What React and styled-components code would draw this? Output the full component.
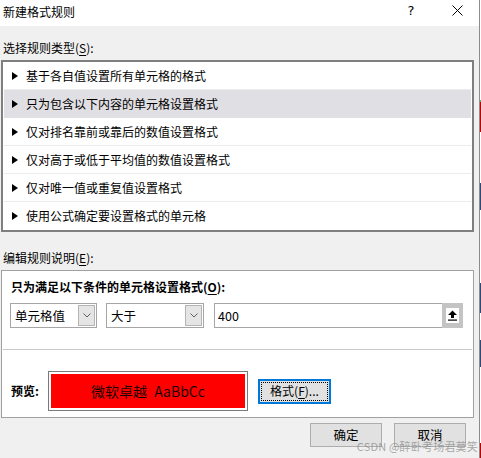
import styled, { createGlobalStyle } from 'styled-components'

const GlobalStyle = createGlobalStyle`
  html, body {
    margin: 0;
    padding: 0;
    background: #f0f0f0;
  }
  body {
    font-family: "Noto Sans CJK SC", "Noto Sans", sans-serif;
    font-size: 12px;
    color: #000;
  }
`

const Page = styled.div`
  position: relative;
  display: flex;
  width: 481px;
  height: 458px;
  overflow: hidden;
`

const Dialog = styled.div`
  width: 479px;
  display: flex;
  flex-direction: column;
  background: #f0f0f0;
  border-right: 1px solid #8c8c8c;
`

const EdgeStrip = styled.div`
  width: 1px;
  display: flex;
  flex-direction: column;
  background: #fff;
`

const Segment = styled.div`
  height: ${(p) => p.$h}px;
  background: ${(p) => p.$c};
  flex-shrink: 0;
`

const TitleBar = styled.div`
  height: 26px;
  display: flex;
  align-items: center;
  justify-content: space-between;
  background: #fff;
`

const Title = styled.span`
  padding-left: 3px;
  font-size: 12px;
  line-height: 16px;
  margin-top: -3px;
`

const TitleButtons = styled.div`
  display: flex;
  align-self: stretch;
  margin-right: -1px;
`

const TitleButton = styled.div`
  width: 46px;
  display: flex;
  align-items: center;
  justify-content: center;
  font-family: "DejaVu Sans", sans-serif;
  font-size: 13px;
  margin-top: -5px;
`

const Content = styled.div`
  display: flex;
  flex-direction: column;
  padding: 0 5px 0 1px;
`

const SectionLabel = styled.div`
  height: 16px;
  line-height: 16px;
  padding-left: 2px;
  margin: ${(p) => p.$top}px 0 4px;
`

const U = styled.span`
  text-decoration: underline;
  text-underline-offset: 2px;
`

const RuleList = styled.div`
  border: 2px solid #7f7f7f;
  background: #fff;
  display: flex;
  flex-direction: column;
  padding: 0 1px;
`

const RuleRow = styled.div`
  height: 27px;
  display: flex;
  align-items: center;
  gap: 8px;
  padding-left: 8px;
  border-bottom: 1px solid ${(p) => (p.$active ? '#e0dfe3' : '#ececec')};
  background: ${(p) => (p.$active ? '#e0dfe3' : '#fff')};
  line-height: 16px;

  &:last-child {
    border-bottom-color: transparent;
  }
`

const Triangle = styled.span`
  width: 0;
  height: 0;
  border-left: 6px solid #000;
  border-top: 4px solid transparent;
  border-bottom: 4px solid transparent;
  margin-top: 1px;
`

const DescBox = styled.div`
  border: 1px solid #a0a0a0;
  background: #fff;
  display: flex;
  flex-direction: column;
`

const Heading = styled.div`
  font-weight: bold;
  line-height: 16px;
  padding: 8px 0 0 9px;
`

const ControlRow = styled.div`
  display: flex;
  height: 25px;
  margin: 8px 10px 0 8px;
`

const Combo = styled.div`
  width: ${(p) => p.$w}px;
  margin-right: ${(p) => p.$gap}px;
  box-sizing: border-box;
  border: 1px solid #a6a6a6;
  display: flex;
  align-items: center;
  padding: 1px;
`

const ComboText = styled.span`
  flex: 1;
  padding-left: 3px;
  line-height: 16px;
  font-size: 12.5px;
`

const DropButton = styled.div`
  width: 17px;
  align-self: stretch;
  box-sizing: border-box;
  background: #e5e5e5;
  border: 1px solid #b4b4b4;
  display: flex;
  align-items: center;
  justify-content: center;
`

const ValueInput = styled.div`
  flex: 1;
  box-sizing: border-box;
  border: 1px solid #a6a6a6;
  display: flex;
  align-items: center;
`

const ValueText = styled.span`
  flex: 1;
  padding-left: 3px;
  font-size: 12.5px;
  line-height: 16px;
`

const RefButton = styled.div`
  width: 21px;
  align-self: stretch;
  margin: -1px -1px -1px 0;
  background: #c4c4c4;
  display: flex;
  align-items: center;
  justify-content: center;
`

const RefInner = styled.div`
  width: 13px;
  height: 15px;
  background: #fff;
  display: flex;
  align-items: center;
  justify-content: center;
`

const Divider = styled.div`
  height: 1px;
  background: #c8c8c8;
  margin: 21px 1px 0;
`

const PreviewRow = styled.div`
  display: flex;
  align-items: center;
  padding: 21px 0 6px 9px;
`

const PreviewLabel = styled.span`
  width: 37px;
  font-weight: bold;
  line-height: 16px;
`

const PreviewFrame = styled.div`
  width: 200px;
  height: 40px;
  box-sizing: border-box;
  border: 1px solid #7a7a7a;
  padding: 2px;
  background: #fff;
  margin-right: 10px;
`

const PreviewFill = styled.div`
  height: 100%;
  background: #ff0000;
  display: flex;
  align-items: center;
  justify-content: center;
  font-size: 14px;
  line-height: 18px;
  color: #1a0000;
  word-spacing: 4px;
`

const FocusButton = styled.div`
  width: 73px;
  height: 25px;
  box-sizing: border-box;
  border: 2px solid #0078d7;
  background: #e1e1e1;
  padding: 1px;
  display: flex;
`

const FocusRing = styled.div`
  flex: 1;
  border: 1px dotted #000;
  display: flex;
  align-items: center;
  justify-content: center;
  line-height: 16px;
`

const Footer = styled.div`
  display: flex;
  justify-content: flex-end;
  gap: 12px;
  margin: 5px 8px 0 0;
`

const DialogButton = styled.div`
  width: 72px;
  height: 24px;
  box-sizing: border-box;
  border: 1px solid #adadad;
  background: #e1e1e1;
  display: flex;
  align-items: center;
  justify-content: center;
  font-size: 12.5px;
  line-height: 16px;
`

const Watermark = styled.div`
  position: absolute;
  right: 3px;
  bottom: 5px;
  font-size: 11px;
  line-height: 13px;
  color: rgba(140, 140, 140, 0.75);
  letter-spacing: 0.2px;
`

const rules = [
  '基于各自值设置所有单元格的格式',
  '只为包含以下内容的单元格设置格式',
  '仅对排名靠前或靠后的数值设置格式',
  '仅对高于或低于平均值的数值设置格式',
  '仅对唯一值或重复值设置格式',
  '使用公式确定要设置格式的单元格',
]

const edgeSegments = [
  [100, '#fff'], [2, '#6aa870'], [30, '#c00000'], [51, '#fff'], [27, '#2b4a7a'],
  [73, '#fff'], [30, '#2b4a7a'], [27, '#fff'], [27, '#2b4a7a'], [76, '#fff'], [15, '#c00000'],
]

const Chevron = () => (
  <svg width="8" height="5" viewBox="0 0 8 5">
    <polyline points="0.5,0.5 4,4 7.5,0.5" fill="none" stroke="#606060" strokeWidth="1" />
  </svg>
)

const UpArrow = () => (
  <svg width="11" height="11" viewBox="0 0 11 11">
    <path d="M5.5 0.5 L10 5 L7 5 L7 8 L4 8 L4 5 L1 5 Z" fill="#000" />
    <rect x="1" y="9.5" width="9" height="1.2" fill="#000" />
  </svg>
)

const CloseIcon = () => (
  <svg width="11" height="11" viewBox="0 0 11 11">
    <path d="M0.5 0.5 L10.5 10.5 M10.5 0.5 L0.5 10.5" stroke="#000" strokeWidth="1" />
  </svg>
)

export default function App() {
  return (
    <Page>
      <GlobalStyle />
      <Dialog>
        <TitleBar>
          <Title>新建格式规则</Title>
          <TitleButtons>
            <TitleButton>?</TitleButton>
            <TitleButton>
              <CloseIcon />
            </TitleButton>
          </TitleButtons>
        </TitleBar>

        <Content>
          <SectionLabel $top={14}>
            选择规则类型(<U>S</U>):
          </SectionLabel>
          <RuleList>
            {rules.map((r, i) => (
              <RuleRow key={r} $active={i === 1}>
                <Triangle />
                {r}
              </RuleRow>
            ))}
          </RuleList>

          <SectionLabel $top={18}>
            编辑规则说明(<U>E</U>):
          </SectionLabel>
          <DescBox>
            <Heading>
              只为满足以下条件的单元格设置格式(<U>O</U>):
            </Heading>
            <ControlRow>
              <Combo $w={87} $gap={9}>
                <ComboText>单元格值</ComboText>
                <DropButton>
                  <Chevron />
                </DropButton>
              </Combo>
              <Combo $w={98} $gap={10}>
                <ComboText>大于</ComboText>
                <DropButton>
                  <Chevron />
                </DropButton>
              </Combo>
              <ValueInput>
                <ValueText>400</ValueText>
                <RefButton>
                  <RefInner>
                    <UpArrow />
                  </RefInner>
                </RefButton>
              </ValueInput>
            </ControlRow>
            <Divider />
            <PreviewRow>
              <PreviewLabel>预览:</PreviewLabel>
              <PreviewFrame>
                <PreviewFill>微软卓越 AaBbCc</PreviewFill>
              </PreviewFrame>
              <FocusButton>
                <FocusRing>
                  格式(<U>F</U>)...
                </FocusRing>
              </FocusButton>
            </PreviewRow>
          </DescBox>

          <Footer>
            <DialogButton>确定</DialogButton>
            <DialogButton>取消</DialogButton>
          </Footer>
        </Content>
      </Dialog>
      <EdgeStrip>
        {edgeSegments.map(([h, c], i) => (
          <Segment key={i} $h={h} $c={c} />
        ))}
      </EdgeStrip>
      <Watermark>CSDN @醉卧考场君莫笑</Watermark>
    </Page>
  )
}
